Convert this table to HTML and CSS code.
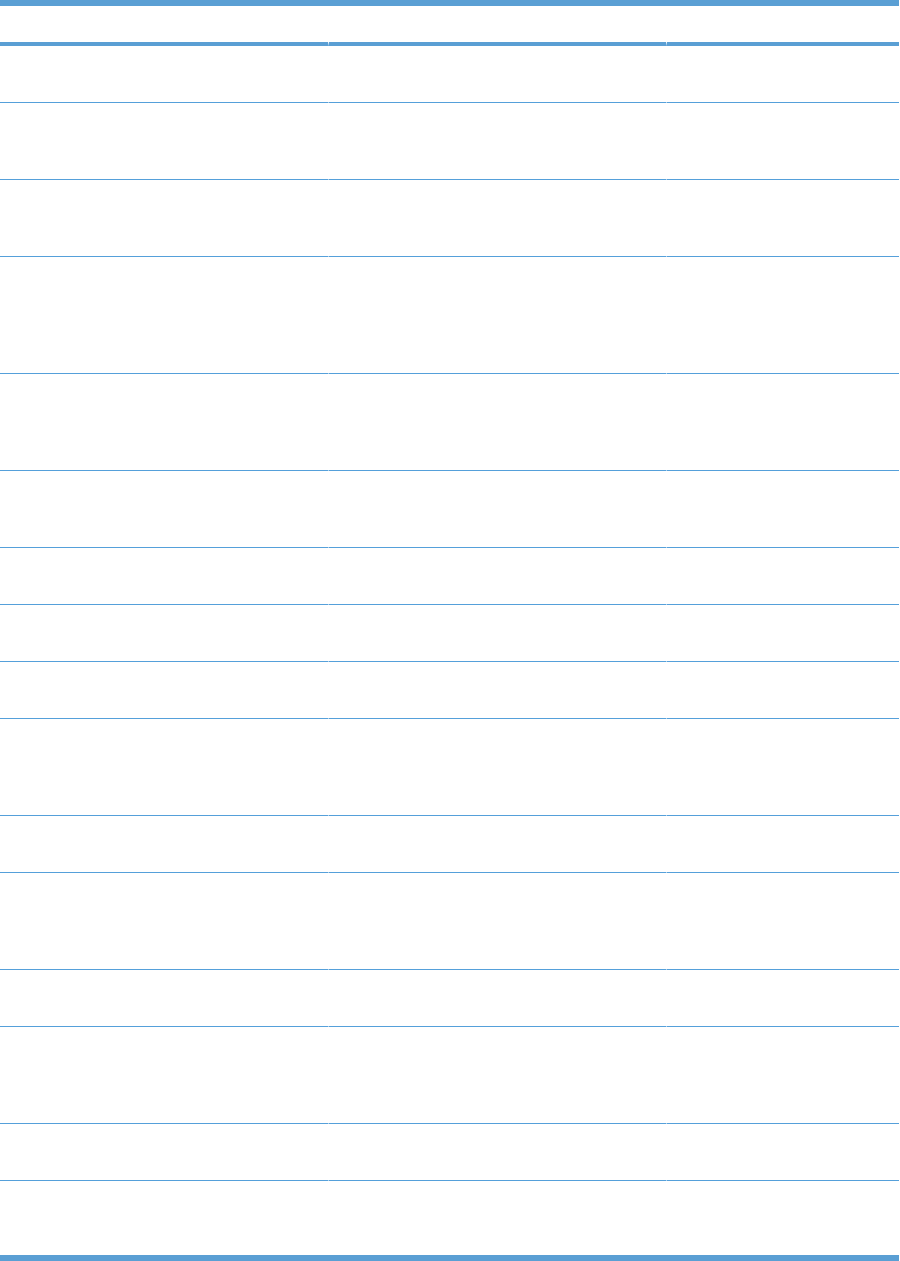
FILE: index.html
```html
<!DOCTYPE html>
<html>
<head>
<meta charset="utf-8"/>
<title>spec table</title>
<meta name="viewport" content="width=device-width"/>
<link rel="stylesheet" href="styles.css">
</head>
<body>
<div class="m-spec">
    <div class="u-row u-head"><div class="u-cell"></div><div class="u-cell"></div><div class="u-cell"></div></div>
    <div class="u-row h1"><div class="u-cell"></div><div class="u-cell"></div><div class="u-cell"></div></div>
    <div class="u-row h2"><div class="u-cell"></div><div class="u-cell"></div><div class="u-cell"></div></div>
    <div class="u-row h2"><div class="u-cell"></div><div class="u-cell"></div><div class="u-cell"></div></div>
    <div class="u-row h4"><div class="u-cell"></div><div class="u-cell"></div><div class="u-cell"></div></div>
    <div class="u-row h3"><div class="u-cell"></div><div class="u-cell"></div><div class="u-cell"></div></div>
    <div class="u-row h2"><div class="u-cell"></div><div class="u-cell"></div><div class="u-cell"></div></div>
    <div class="u-row h1"><div class="u-cell"></div><div class="u-cell"></div><div class="u-cell"></div></div>
    <div class="u-row h1"><div class="u-cell"></div><div class="u-cell"></div><div class="u-cell"></div></div>
    <div class="u-row h1"><div class="u-cell"></div><div class="u-cell"></div><div class="u-cell"></div></div>
    <div class="u-row h3"><div class="u-cell"></div><div class="u-cell"></div><div class="u-cell"></div></div>
    <div class="u-row h1"><div class="u-cell"></div><div class="u-cell"></div><div class="u-cell"></div></div>
    <div class="u-row h3"><div class="u-cell"></div><div class="u-cell"></div><div class="u-cell"></div></div>
    <div class="u-row h1"><div class="u-cell"></div><div class="u-cell"></div><div class="u-cell"></div></div>
    <div class="u-row h3"><div class="u-cell"></div><div class="u-cell"></div><div class="u-cell"></div></div>
    <div class="u-row h1"><div class="u-cell"></div><div class="u-cell"></div><div class="u-cell"></div></div>
    <div class="u-row u-last"><div class="u-cell"></div><div class="u-cell"></div><div class="u-cell"></div></div>
</div>
</body>
</html>
```

FILE: styles.css
```css
/* reset */
html,body,div{margin:0;padding:0;}
body{background-color:#fff;color:#333;font:14px/20px "Liberation Sans",Arial,sans-serif;}
/* table */
.m-spec{width:899px;border-top:6px solid #5a9fd4;border-bottom:6px solid #5a9fd4;}
.u-row{display:grid;grid-template-columns:328px 338px 233px;}
.u-cell{box-sizing:border-box;border-bottom:1px solid #55a0da;}
.u-cell+.u-cell{border-left:1px solid #fff;}
.u-head .u-cell{height:40px;border-bottom:4px solid #5a9fd4;}
.h1 .u-cell{height:57px;}
.h2 .u-cell{height:77px;}
.h3 .u-cell{height:97px;}
.h4 .u-cell{height:117px;}
.u-last .u-cell{height:74px;border-bottom:none;}
```
